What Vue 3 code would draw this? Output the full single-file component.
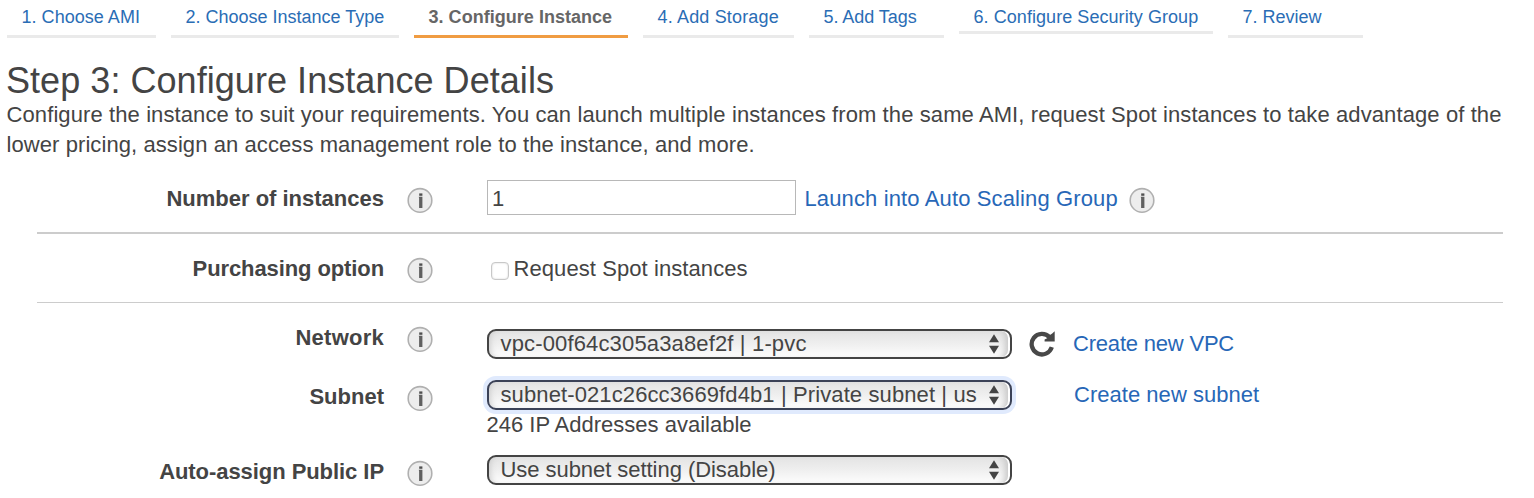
<script setup>
const steps = [
  { label: '1. Choose AMI', cls: 's1' },
  { label: '2. Choose Instance Type', cls: 's2' },
  { label: '3. Configure Instance', cls: 's3 active' },
  { label: '4. Add Storage', cls: 's4' },
  { label: '5. Add Tags', cls: 's5' },
  { label: '6. Configure Security Group', cls: 's6' },
  { label: '7. Review', cls: 's7' },
]

const rows = [
  { key: 'count', label: 'Number of instances' },
  { key: 'purchase', label: 'Purchasing option' },
  { key: 'network', label: 'Network', value: 'vpc-00f64c305a3a8ef2f | 1-pvc', link: 'Create new VPC', refresh: true },
  { key: 'subnet', label: 'Subnet', value: 'subnet-021c26cc3669fd4b1 | Private subnet | us', link: 'Create new subnet', note: '246 IP Addresses available' },
  { key: 'publicip', label: 'Auto-assign Public IP', value: 'Use subnet setting (Disable)' },
]
</script>

<template>
  <main class="page">
    <nav class="steps">
      <a v-for="s in steps" :key="s.label" class="step" :class="s.cls"><span>{{ s.label }}</span></a>
    </nav>

    <h1>Step 3: Configure Instance Details</h1>
    <p class="intro">
      <span class="line l1">Configure the instance to suit your requirements. You can launch multiple instances from the same AMI, request Spot instances to take advantage of the</span>
      <span class="line l2">lower pricing, assign an access management role to the instance, and more.</span>
    </p>

    <section class="form">
      <div v-for="r in rows" :key="r.key" class="row" :class="r.key">
        <label class="label"><span>{{ r.label }}</span></label>
        <svg class="info" viewBox="0 0 26 26">
          <circle cx="13" cy="13.4" r="11.8" fill="#ededed" stroke="#b0b0b0" stroke-width="1.6" />
          <rect x="12.2" y="6.4" width="3.2" height="2.4" fill="#505050" />
          <path d="M11.7 9.8h3.7v11.1h-3.3V11z" fill="#606060" />
        </svg>

        <div v-if="r.key === 'count'" class="field">
          <div class="input">1</div>
          <a class="link launch">Launch into Auto Scaling Group</a>
          <svg class="info after" viewBox="0 0 26 26">
            <circle cx="13" cy="13.4" r="11.8" fill="#ededed" stroke="#b0b0b0" stroke-width="1.6" />
            <rect x="12.2" y="6.4" width="3.2" height="2.4" fill="#505050" />
            <path d="M11.7 9.8h3.7v11.1h-3.3V11z" fill="#606060" />
          </svg>
        </div>

        <div v-else-if="r.key === 'purchase'" class="field">
          <i class="check"></i>
          <span class="spot">Request Spot instances</span>
        </div>

        <div v-else class="field">
          <div class="stack">
            <div class="select">
              <span class="value">{{ r.value }}</span>
              <svg class="arrows" viewBox="0 0 10 20">
                <path d="M5 0.3l5 8H0zM5 19.7l5-8H0z" fill="#444" />
              </svg>
            </div>
            <div v-if="r.note" class="note">{{ r.note }}</div>
          </div>
          <div class="extra">
            <svg v-if="r.refresh" class="refresh" viewBox="0 0 27 27">
              <path d="M21.6 7.2A10.3 10.3 0 1 0 23.8 17.2" fill="none" stroke="#484848" stroke-width="4.3" />
              <path d="M26.7 1.2v10.3H16.6V9.6l3-1.6 2-2.8 2.6-1.6z" fill="#484848" />
            </svg>
          </div>
          <a v-if="r.link" class="link create">{{ r.link }}</a>
        </div>
      </div>
    </section>
  </main>
</template>

<style>
body { background: #fff; overflow: hidden; }
</style>

<style scoped>
* { box-sizing: border-box; }
.page {
  width: 1534px;
  height: 498px;
  overflow: hidden;
  background: #fff;
  font: 22px/30px "Liberation Sans", Arial, sans-serif;
  letter-spacing: 0.08px;
  color: #444;
  white-space: nowrap;
}
.steps {
  display: flex;
  align-items: flex-start;
  gap: 15px;
  height: 62px;
  padding-left: 7px;
}
.step {
  height: 38px;
  padding: 7px 0 0 14.5px;
  border-bottom: 3px solid #eaeaea;
  color: #2a6db5;
  font-size: 18px;
  line-height: 20px;
  letter-spacing: 0.03px;
}
.s1 { width: 149px; }
.s2 { width: 228px; letter-spacing: 0; }
.s3 { width: 214px; }
.s4 { width: 151px; letter-spacing: 0.16px; }
.s5 { width: 135px; letter-spacing: -0.05px; }
.s6 { width: 254px; height: 34px; letter-spacing: 0.06px; }
.s7 { width: 135px; letter-spacing: 0; }
.active {
  border-color: #f09c42;
  color: #666;
  font-weight: bold;
}
h1 {
  margin: 0;
  height: 38px;
  padding-left: 6px;
  font-size: 36px;
  line-height: 38px;
  font-weight: normal;
  letter-spacing: 0.05px;
}
.intro { margin: 0 0 0 6.5px; }
.line { display: block; }
.l1 { letter-spacing: 0.102px; }
.row {
  display: grid;
  grid-template-columns: 384px 26px 1fr;
  column-gap: 23px;
  align-items: start;
}
.count, .purchase { position: relative; }
.count { height: 74px; padding-top: 24px; }
.purchase { height: 69px; padding-top: 20px; }
.count::after, .purchase::after {
  content: "";
  position: absolute;
  left: 37px;
  right: 31px;
  bottom: 0;
  border-bottom: 2px solid #ccc;
}
.purchase::after { border-bottom-width: 1px; }
.network { height: 59px; padding-top: 20px; }
.subnet { height: 75px; padding-top: 20px; }
.publicip { padding-top: 20px; }
.label { text-align: right; font-weight: bold; letter-spacing: 0; }
.purchase .label { letter-spacing: -0.1px; }
.network .label { letter-spacing: 0.25px; }
.publicip .label { letter-spacing: -0.06px; }
.info { width: 26px; height: 26px; margin-top: 3px; }
.purchase .info { margin-top: 2.5px; }
.field { display: flex; align-items: flex-start; margin-left: 31px; }
.count .field { margin-top: -4px; }
.input {
  width: 309px;
  height: 35px;
  padding: 3px 0 0 4px;
  border: 1px solid #b8b8b8;
}
.launch { margin: 4px 0 0 8.5px; letter-spacing: 0.13px; }
.after { margin: 7px 0 0 11px; }
.check {
  width: 18px;
  height: 18px;
  margin: 8px 5px 0 4px;
  border: 1px solid #c8c8c8;
  border-radius: 4px;
  box-shadow: inset 0 0 2px #ccc;
}
.spot { margin-left: -0.5px; }
.network .field { margin-top: 6px; }
.subnet .field, .publicip .field { margin-top: -2px; }
.stack { width: 525px; }
.select {
  display: flex;
  align-items: center;
  justify-content: space-between;
  height: 30px;
  padding: 0 11px 0 11.5px;
  border: 2px solid #444;
  border-radius: 9px;
  background: linear-gradient(#e3e3e3, #efefef 50%, #fdfdfd);
  box-shadow: inset -2px 0 0 #fff, inset -9px 0 6px -4px #c8c8c8, inset 6px 0 6px -5px #c8c8c8;
}
.subnet .select {
  border-color: #3b4257;
  box-shadow: 0 0 0 4px #e0eafd, inset -2px 0 0 #fff, inset -9px 0 6px -4px #c8c8c8, inset 6px 0 6px -5px #c8c8c8;
}
.value { line-height: 30px; }
.network .value { letter-spacing: 0.15px; }
.subnet .value { letter-spacing: 0.11px; }
.publicip .value { letter-spacing: -0.05px; }
.arrows { width: 10px; height: 20px; }
.note { margin-left: -0.5px; letter-spacing: 0; }
.extra { width: 61px; padding: 1px 0 0 16px; }
.subnet .extra { width: 62px; }
.refresh { display: block; width: 27px; height: 27px; }
.link { color: #2767b7; }
.network .create { letter-spacing: -0.2px; }
.subnet .create { letter-spacing: 0.03px; }
</style>
